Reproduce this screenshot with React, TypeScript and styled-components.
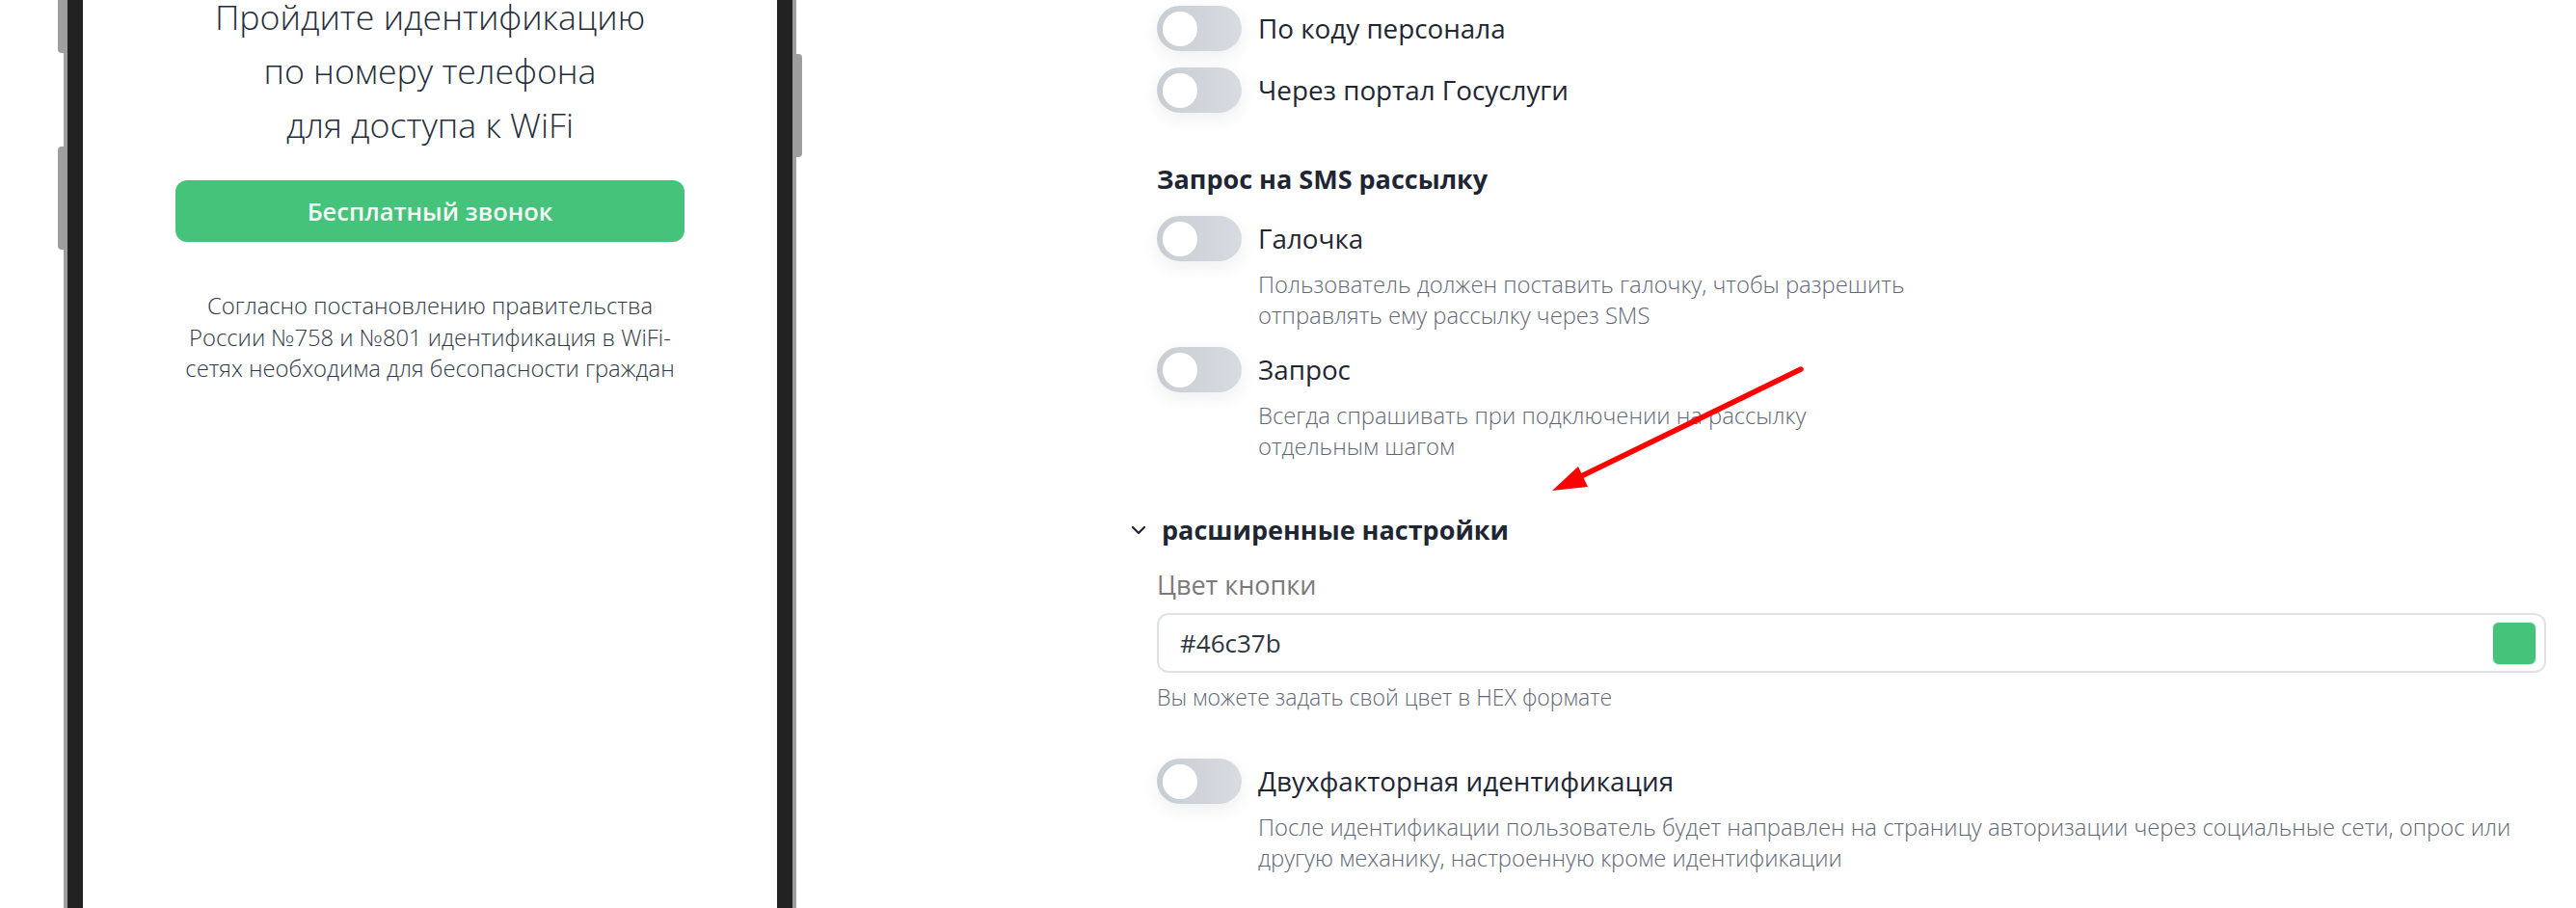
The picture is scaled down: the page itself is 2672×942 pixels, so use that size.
import React from "react";
import styled, { createGlobalStyle } from "styled-components";

const GlobalStyle = createGlobalStyle`
  html, body {
    margin: 0;
    padding: 0;
    background: #ffffff;
  }
  body {
    font-family: "Open Sans", "Noto Sans", sans-serif;
    -webkit-font-smoothing: antialiased;
  }
  * { box-sizing: border-box; }
`;

const Page = styled.div`
  position: relative;
  display: flex;
  width: 2672px;
  height: 942px;
  overflow: hidden;
  background: #ffffff;
`;

const PhoneColumn = styled.div`
  position: relative;
  flex: 0 0 760px;
  margin-left: 66px;
  margin-top: -60px;
  height: 1100px;
`;

const PhoneBody = styled.div`
  height: 100%;
  border: 4px solid #9e9e9e;
  border-radius: 60px;
  background: #222222;
  padding: 0 16px;
  display: flex;
`;

const Screen = styled.div`
  flex: 1;
  background: #ffffff;
  display: flex;
  flex-direction: column;
  align-items: center;
  padding-top: 45px;
`;

const SideButton = styled.div<{ $side: "left" | "right"; $top: number; $height: number }>`
  position: absolute;
  top: ${(p) => p.$top}px;
  ${(p) => (p.$side === "left" ? "left: -6px;" : "right: -6px;")}
  width: 10px;
  height: ${(p) => p.$height}px;
  background: #9e9e9e;
  border-radius: ${(p) => (p.$side === "left" ? "4px 0 0 4px" : "0 4px 4px 0")};
`;

const Title = styled.h1`
  margin: 0;
  font-family: "Open Sans", sans-serif;
  font-weight: 300;
  font-size: 35.7px;
  line-height: 56px;
  color: #252d3a;
  text-align: center;
`;

const CallButton = styled.button`
  margin-top: 30px;
  width: 528px;
  height: 64px;
  border: none;
  border-radius: 12px;
  background: #46c37b;
  color: #f7f9f8;
  font-family: "Open Sans", sans-serif;
  font-weight: 600;
  font-size: 25.5px;
`;

const LegalText = styled.p`
  margin: 50px 0 0;
  font-family: "Open Sans", sans-serif;
  font-weight: 300;
  font-size: 23.8px;
  line-height: 32.5px;
  color: #303846;
  text-align: center;
  white-space: nowrap;
`;

const Settings = styled.div`
  flex: 1;
  margin-left: 374px;
  padding: 6px 31px 0 0;
  display: flex;
  flex-direction: column;
`;

const ToggleList = styled.div`
  display: flex;
  flex-direction: column;
  gap: 17px;
`;

const Row = styled.div`
  display: grid;
  grid-template-columns: 88px 1fr;
  column-gap: 17px;
`;

const Track = styled.div`
  width: 88px;
  height: 47px;
  border-radius: 24px;
  background: linear-gradient(90deg, #c8cdd4 0%, #d8dce1 100%);
  box-shadow: 0 6px 18px rgba(40, 50, 70, 0.08);
  display: flex;
  align-items: center;
  padding-left: 6px;
`;

const Knob = styled.div`
  width: 36px;
  height: 36px;
  border-radius: 50%;
  background: #ffffff;
`;

const Label = styled.div`
  font-size: 27.8px;
  line-height: 47px;
  color: #1f2633;
  white-space: nowrap;
`;

const Description = styled.div`
  grid-column: 2;
  margin-top: 8px;
  font-size: 23.8px;
  font-weight: 300;
  line-height: 32px;
  color: #5f6775;
  white-space: nowrap;
`;

const SectionHeading = styled.div<{ $top: number }>`
  margin-top: ${(p) => p.$top}px;
  margin-bottom: 20px;
  font-size: 27px;
  line-height: 36px;
  font-weight: 700;
  color: #1f2633;
`;

const AdvancedHeader = styled.div`
  margin-top: 53px;
  margin-left: -27px;
  display: flex;
  align-items: center;
  gap: 16px;
  font-size: 27px;
  line-height: 36px;
  font-weight: 700;
  color: #1f2633;
`;

const FieldLabel = styled.div`
  margin-top: 21px;
  font-size: 27px;
  line-height: 36px;
  color: #7a7a7a;
`;

const InputBox = styled.div`
  margin-top: 11px;
  height: 62px;
  border: 2px solid #dfe3e8;
  border-radius: 12px;
  display: flex;
  align-items: center;
  justify-content: space-between;
  padding: 0 8px 0 22px;
`;

const InputValue = styled.span`
  font-size: 26px;
  color: #2d3440;
`;

const Swatch = styled.div<{ $color: string }>`
  width: 46px;
  height: 45px;
  border-radius: 7px;
  background: ${(p) => p.$color};
  border: 1px solid #e3e6ea;
`;

const Helper = styled.div`
  margin-top: 9px;
  font-size: 23px;
  font-weight: 300;
  line-height: 32px;
  color: #5f6775;
`;

const Spacer = styled.div<{ $h: number }>`
  height: ${(p) => p.$h}px;
`;

const ArrowOverlay = styled.svg`
  position: absolute;
  left: 0;
  top: 0;
  pointer-events: none;
`;

type ToggleProps = { label: string; desc?: React.ReactNode };

const ToggleRow = ({ label, desc }: ToggleProps) => (
  <Row>
    <Track>
      <Knob />
    </Track>
    <Label>{label}</Label>
    {desc && <Description>{desc}</Description>}
  </Row>
);

const Chevron = () => (
  <svg width="16" height="10" viewBox="0 0 16 10" fill="none">
    <path d="M2 2 L8 8 L14 2" stroke="#1f2633" strokeWidth="2.2" strokeLinecap="round" strokeLinejoin="round" />
  </svg>
);

export default function App() {
  const color = "#46c37b";
  return (
    <>
      <GlobalStyle />
      <Page>
        <PhoneColumn>
          <SideButton $side="left" $top={0} $height={115} />
          <SideButton $side="left" $top={212} $height={107} />
          <SideButton $side="right" $top={116} $height={107} />
          <PhoneBody>
            <Screen>
              <Title>
                Пройдите идентификацию
                <br />
                по номеру телефона
                <br />
                для доступа к WiFi
              </Title>
              <CallButton>Бесплатный звонок</CallButton>
              <LegalText>
                Согласно постановлению правительства
                <br />
                России №758 и №801 идентификация в WiFi-
                <br />
                сетях необходима для бесопасности граждан
              </LegalText>
            </Screen>
          </PhoneBody>
        </PhoneColumn>

        <Settings>
          <ToggleList>
            <ToggleRow label="По коду персонала" />
            <ToggleRow label="Через портал Госуслуги" />
          </ToggleList>

          <SectionHeading $top={51}>Запрос на SMS рассылку</SectionHeading>
          <ToggleList>
            <ToggleRow
              label="Галочка"
              desc={
                <>
                  Пользователь должен поставить галочку, чтобы разрешить
                  <br />
                  отправлять ему рассылку через SMS
                </>
              }
            />
            <ToggleRow
              label="Запрос"
              desc={
                <>
                  Всегда спрашивать при подключении на рассылку
                  <br />
                  отдельным шагом
                </>
              }
            />
          </ToggleList>

          <AdvancedHeader>
            <Chevron />
            расширенные настройки
          </AdvancedHeader>
          <FieldLabel>Цвет кнопки</FieldLabel>
          <InputBox>
            <InputValue>{color}</InputValue>
            <Swatch $color={color} />
          </InputBox>
          <Helper>Вы можете задать свой цвет в HEX формате</Helper>
          <Spacer $h={48} />
          <ToggleRow
            label="Двухфакторная идентификация"
            desc={
              <>
                После идентификации пользователь будет направлен на страницу авторизации через социальные сети, опрос или
                <br />
                другую механику, настроенную кроме идентификации
              </>
            }
          />
        </Settings>

        <ArrowOverlay width="2672" height="942" viewBox="0 0 2672 942">
          <line x1="1868" y1="383" x2="1632" y2="498" stroke="#ff0000" strokeWidth="5.5" strokeLinecap="round" />
          <polygon points="1610,509 1637,484 1647,505" fill="#ff0000" />
        </ArrowOverlay>
      </Page>
    </>
  );
}
